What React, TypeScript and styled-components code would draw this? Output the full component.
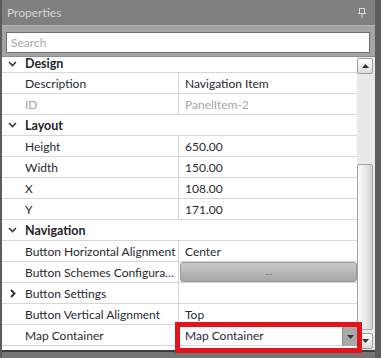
import React from 'react';
import styled, { createGlobalStyle } from 'styled-components';

const GlobalStyle = createGlobalStyle`
  html, body {
    margin: 0;
    padding: 0;
    background: #5c5c5c;
  }
  * {
    box-sizing: border-box;
  }
`;

const font = `Lato, "Open Sans", Arial, sans-serif`;

const Frame = styled.div`
  position: relative;
  width: 381px;
  height: 358px;
  background: #5c5c5c;
  padding: 0 6px 0 2px;
  font-family: ${font};
  overflow: hidden;
`;

const Panel = styled.div`
  display: flex;
  flex-direction: column;
  width: 373px;
  height: 350px;
`;

const TitleBar = styled.div`
  height: 25px;
  display: flex;
  align-items: center;
  justify-content: space-between;
  padding: 0 9px 0 5px;
  background: #7f7f7f;
  color: #d6d6d6;
  font-size: 12px;
`;

const SearchBand = styled.div`
  height: 32px;
  padding: 6px 5px 0 4px;
  background: #a4a4a4;
  border-top: 1px solid #b4b4b4;
  border-bottom: 1px solid #8c8c8c;
`;

const SearchBox = styled.div`
  height: 21px;
  width: 364px;
  background: #fff;
  border: 1px solid #6f6f6f;
  color: #a8a8a8;
  font-size: 12px;
  line-height: 19px;
  padding-left: 4px;
`;

const Body = styled.div`
  flex: 1;
  display: flex;
  min-height: 0;
`;

const Grid = styled.div`
  width: 355px;
  background: #fff;
  overflow: hidden;
`;

const Row = styled.div`
  display: grid;
  grid-template-columns: 176px 1fr;
  height: 21px;
  border-bottom: 1px solid #d6d6d6;
  font-size: 12px;
  color: #262a33;
`;

// the grid is scrolled a little, so the first header shows only its lower part
const CategoryRow = styled.div<{ $partial?: boolean }>`
  display: flex;
  align-items: center;
  height: ${({ $partial }) => ($partial ? '16px' : '21px')};
  padding-bottom: ${({ $partial }) => ($partial ? '2px' : '0')};
  border-bottom: 1px solid #d6d6d6;
  font-size: 12.5px;
  font-weight: 700;
  color: #1f232b;
`;

const Expander = styled.div`
  width: 23px;
  height: 100%;
  display: flex;
  align-items: center;
  justify-content: center;
  padding-right: 2px;
  flex-shrink: 0;
`;

const NameCell = styled.div<{ $disabled?: boolean }>`
  display: flex;
  align-items: center;
  min-width: 0;
  color: ${({ $disabled }) => ($disabled ? '#a6a6a6' : 'inherit')};
`;

const NameText = styled.span`
  overflow: hidden;
  white-space: nowrap;
  text-overflow: ellipsis;
  padding-right: 2px;
`;

const ValueCell = styled.div<{ $disabled?: boolean }>`
  display: flex;
  align-items: center;
  border-left: 1px solid #d6d6d6;
  padding-left: 6px;
  color: ${({ $disabled }) => ($disabled ? '#a6a6a6' : 'inherit')};
  min-width: 0;
`;

const EllipsisButton = styled.div`
  flex: 1;
  height: 20px;
  margin-left: -5px;
  border-radius: 3px;
  background: linear-gradient(#cacaca, #a7a7a7);
  border: 1px solid #9a9a9a;
  display: flex;
  align-items: center;
  justify-content: center;
  color: #6d6d6d;
  font-size: 10px;
  padding-bottom: 3px;
`;

const Combo = styled.div`
  flex: 1;
  height: 100%;
  display: flex;
  align-items: center;
  justify-content: space-between;
`;

const ComboButton = styled.div`
  width: 15px;
  height: 19px;
  margin-top: 2px;
  background: #a9a9a9;
  border-left: 1px solid #8f8f8f;
  display: flex;
  align-items: center;
  justify-content: center;
`;

const ScrollBar = styled.div`
  width: 18px;
  background: #e9e9e9;
  display: flex;
  flex-direction: column;
  padding: 1px 2px 0 0;
`;

const ScrollButton = styled.div`
  width: 16px;
  height: 16px;
  border: 1px solid #9c9c9c;
  border-radius: 2px;
  background: linear-gradient(#ffffff, #dcdcdc);
  display: flex;
  align-items: center;
  justify-content: center;
`;

const Thumb = styled.div`
  width: 16px;
  height: 166px;
  margin: 90px 0 3px;
  border: 1px solid #a4a4a4;
  border-radius: 2px;
  background: linear-gradient(90deg, #fbfbfb, #e6e6e6 60%, #cfcfcf);
`;

const BottomEdge = styled.div`
  height: 8px;
  border-top: 2px solid #3e3e3e;
  background: #747474;
  width: 373px;
`;

const Highlight = styled.div`
  position: absolute;
  left: 175px;
  top: 322px;
  width: 187px;
  height: 31px;
  border: 5px solid #e3141d;
  pointer-events: none;
`;

const Pin = () => (
  <svg width="8" height="10" viewBox="0 0 8 10">
    <rect x="1.5" y="0.5" width="5" height="5" fill="none" stroke="#dcdcdc" />
    <rect x="0" y="5" width="8" height="1" fill="#dcdcdc" />
    <rect x="3.5" y="6" width="1" height="4" fill="#dcdcdc" />
  </svg>
);

const ChevronDown = () => (
  <svg width="9" height="6" viewBox="0 0 9 6">
    <path d="M1 1 L4.5 4.5 L8 1" fill="none" stroke="#3a3a3a" strokeWidth="1.6" />
  </svg>
);

const ChevronRight = () => (
  <svg width="6" height="9" viewBox="0 0 6 9">
    <path d="M1 1 L4.5 4.5 L1 8" fill="none" stroke="#2a2a2a" strokeWidth="1.8" />
  </svg>
);

const Arrow = ({ up }: { up?: boolean }) => (
  <svg width="7" height="4" viewBox="0 0 7 4">
    <path d={up ? 'M0 4 L3.5 0 L7 4 Z' : 'M0 0 L3.5 4 L7 0 Z'} fill="#333" />
  </svg>
);

type Prop = {
  name: string;
  value?: string;
  disabled?: boolean;
  kind?: 'text' | 'button' | 'combo' | 'expand';
};

type Category = { title: string; props: Prop[] };

const categories: Category[] = [
  {
    title: 'Design',
    props: [
      { name: 'Description', value: 'Navigation Item' },
      { name: 'ID', value: 'PanelItem-2', disabled: true },
    ],
  },
  {
    title: 'Layout',
    props: [
      { name: 'Height', value: '650.00' },
      { name: 'Width', value: '150.00' },
      { name: 'X', value: '108.00' },
      { name: 'Y', value: '171.00' },
    ],
  },
  {
    title: 'Navigation',
    props: [
      { name: 'Button Horizontal Alignment', value: 'Center' },
      { name: 'Button Schemes Configuration', kind: 'button' },
      { name: 'Button Settings', kind: 'expand' },
      { name: 'Button Vertical Alignment', value: 'Top' },
      { name: 'Map Container', value: 'Map Container', kind: 'combo' },
    ],
  },
];

const renderValue = (p: Prop) => {
  if (p.kind === 'button') return <EllipsisButton>...</EllipsisButton>;
  if (p.kind === 'expand') return null;
  if (p.kind === 'combo')
    return (
      <Combo>
        <span>{p.value}</span>
        <ComboButton>
          <Arrow />
        </ComboButton>
      </Combo>
    );
  return p.value;
};

export default function App() {
  return (
    <>
      <GlobalStyle />
      <Frame>
        <Panel>
          <TitleBar>
            <span>Properties</span>
            <Pin />
          </TitleBar>
          <SearchBand>
            <SearchBox>Search</SearchBox>
          </SearchBand>
          <Body>
            <Grid>
              {categories.map((cat, i) => (
                <React.Fragment key={cat.title}>
                  <CategoryRow $partial={i === 0}>
                    <Expander>
                      <ChevronDown />
                    </Expander>
                    {cat.title}
                  </CategoryRow>
                  {cat.props.map(p => (
                    <Row key={p.name}>
                      <NameCell $disabled={p.disabled}>
                        <Expander>{p.kind === 'expand' && <ChevronRight />}</Expander>
                        <NameText>{p.name}</NameText>
                      </NameCell>
                      <ValueCell $disabled={p.disabled}>{renderValue(p)}</ValueCell>
                    </Row>
                  ))}
                </React.Fragment>
              ))}
            </Grid>
            <ScrollBar>
              <ScrollButton>
                <Arrow up />
              </ScrollButton>
              <Thumb />
              <ScrollButton>
                <Arrow />
              </ScrollButton>
            </ScrollBar>
          </Body>
        </Panel>
        <BottomEdge />
        <Highlight />
      </Frame>
    </>
  );
}
